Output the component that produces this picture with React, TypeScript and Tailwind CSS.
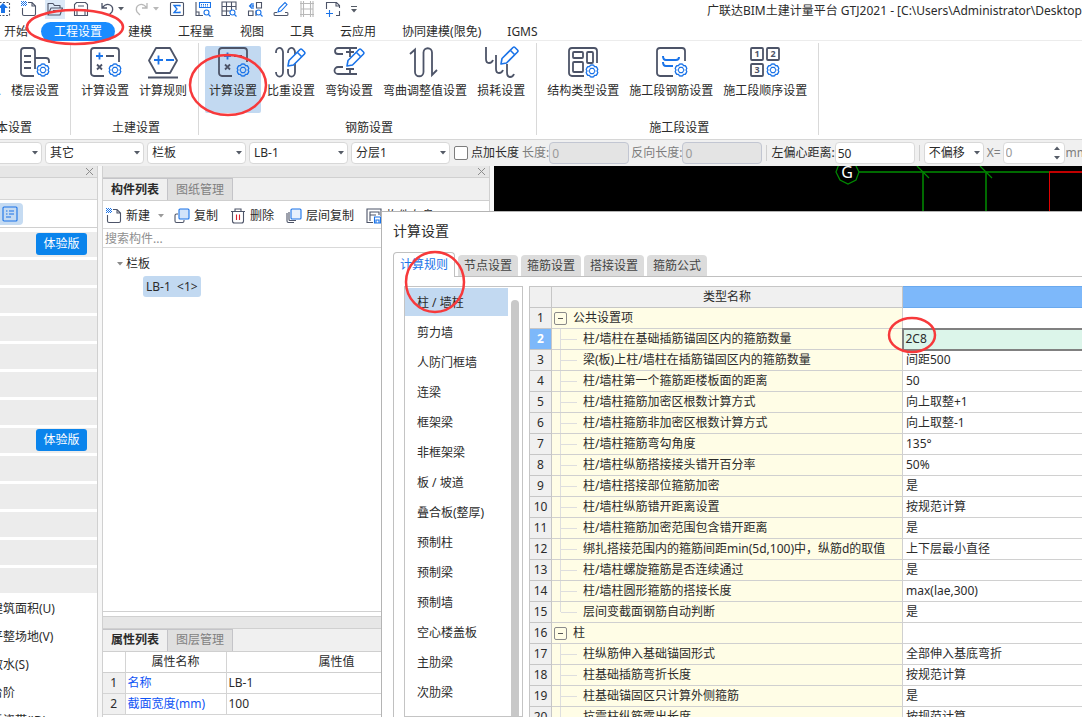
import type { ReactNode } from "react";

const DARK = "#4d5468";
const BLUE = "#1a73e8";

const Gear = ({ x, y, r = 6 }: { x: number; y: number; r?: number }) => {
  const points = Array.from({ length: 24 }, (_, i) => {
    const angle = (i * Math.PI) / 12;
    const radius = r * (i % 4 === 0 ? 0.84 : 1);
    return `${x + radius * Math.cos(angle)},${y + radius * Math.sin(angle)}`;
  }).join(" ");

  return (
    <g stroke={BLUE} fill="none" strokeWidth="1.3" strokeLinejoin="round">
      <polygon points={points} />
      <path d={`M${x - 1.5} ${y - 2.6}h3l1.5 2.6l-1.5 2.6h-3l-1.5-2.6z`} strokeWidth="1.1" />
    </g>
  );
};

const Pencil = ({ x, y }: { x: number; y: number }) => (
  <g transform={`translate(${x} ${y})`} stroke={BLUE} fill="#fff" strokeWidth="1.6" strokeLinejoin="round">
    <path d="M1 18l1-5.500L13 1.500q1-1 2 0l2.500 2.500q1 1 0 2L6.500 17z" />
    <path d="M10.500 4.500l4 4" fill="none" />
  </g>
);

const Art = ({ children, w = 30 }: { children: ReactNode; w?: number }) => (
  <svg
    width={w}
    height="30"
    viewBox={`0 0 ${w} 30`}
    fill="none"
    stroke={DARK}
    strokeWidth="1.8"
    className="overflow-visible"
    aria-hidden="true"
  >
    {children}
  </svg>
);

const FloorArt = () => (
  <Art>
    <path d="M14 29H4a3 3 0 0 1-3-3V4a3 3 0 0 1 3-3h8a3 3 0 0 1 3 3v18M15 11h11a3 3 0 0 1 3 3v2M4 9h7M4 15h7M4 21h7" />
    <Gear x={23} y={23} />
  </Art>
);

const CalcArt = () => (
  <Art>
    <path d="M14 29H4a3 3 0 0 1-3-3V4a3 3 0 0 1 3-3h22a3 3 0 0 1 3 3v11M16 9h8M7 17.500l5 5M12 17.500l-5 5" />
    <path d="M6 9h7M9.500 5.500v7" stroke={BLUE} />
    <Gear x={25} y={23} />
  </Art>
);

const RuleArt = () => (
  <Art>
    <path d="M8 1h14l7 12.500L22 26H8L1 13.500zM0 30.500h30" strokeLinejoin="round" />
    <path d="M6 13h9M10.500 8.500v9M18 13h8" stroke={BLUE} />
  </Art>
);

const WeightArt = () => (
  <Art>
    <path d="M0 6a3 4 0 0 1 7-1v20a3 4 0 0 1-7 0M12 6a3 4 0 0 1 7-1v20a3 4 0 0 1-7 0v-3" />
    <Pencil x={11} y={1} />
  </Art>
);

const HookArt = () => (
  <Art>
    <path d="M23 1H4a3 3 0 0 0 0 6h5M9 20H4a3 3 0 0 0 0 7h19M16 2v8M12 5h8M16 21v6M12 22h8" />
    <Pencil x={12} y={1} />
  </Art>
);

const BendArt = () => (
  <Art>
    <path d="M0 7l5-4.500V25a4 4 0 0 0 8.500 0V5.500a4 4 0 0 1 8.500 0V28l5-5" />
  </Art>
);

const LossArt = () => (
  <Art>
    <path d="M0 0v12q0 4 3 4t4-3M10 8v14q0 4 3 4t4-3M21 17v8q0 5 3 5t4-3" />
    <Pencil x={14} y={-1} />
  </Art>
);

const StructArt = () => (
  <Art>
    <path d="M16 29H4a3 3 0 0 1-3-3V4a3 3 0 0 1 3-3h22a3 3 0 0 1 3 3v12" />
    <rect x="5" y="5" width="10" height="6" rx="1" />
    <rect x="19" y="5" width="6" height="11" rx="1" />
    <rect x="5" y="15" width="10" height="10" rx="1" />
    <Gear x={24} y={24} />
  </Art>
);

const StageArt = () => (
  <Art>
    <path d="M17 29H4a3 3 0 0 1-3-3V4a3 3 0 0 1 3-3h22a3 3 0 0 1 3 3v10" />
    <path d="M7 9q0 4 3 4h10q3 0 3-3M7 15q0 4 3 4h7" stroke={BLUE} strokeWidth="2" />
    <Gear x={25} y={23} />
  </Art>
);

const OrderArt = () => (
  <Art>
    <rect x="1" y="1" width="12" height="12" rx="1" />
    <rect x="17" y="1" width="12" height="12" rx="1" />
    <rect x="1" y="17" width="12" height="12" rx="1" />
    <g fill={DARK} stroke="none" fontSize="9" fontWeight="700" textAnchor="middle">
      <text x="7" y="10">1</text>
      <text x="23" y="10">2</text>
      <text x="7" y="26">3</text>
    </g>
    <Gear x={23} y={23} />
  </Art>
);

const ribbon = [
  {
    title: "基本设置",
    items: [
      { label: "工程信息", art: <FloorArt /> },
      { label: "楼层设置", art: <FloorArt /> },
    ],
  },
  {
    title: "土建设置",
    items: [
      { label: "计算设置", art: <CalcArt /> },
      { label: "计算规则", art: <RuleArt /> },
    ],
  },
  {
    title: "钢筋设置",
    items: [
      { label: "计算设置", art: <CalcArt />, active: true },
      { label: "比重设置", art: <WeightArt /> },
      { label: "弯钩设置", art: <HookArt /> },
      { label: "弯曲调整值设置", art: <BendArt /> },
      { label: "损耗设置", art: <LossArt /> },
    ],
  },
  {
    title: "施工段设置",
    items: [
      { label: "结构类型设置", art: <StructArt /> },
      { label: "施工段钢筋设置", art: <StageArt /> },
      { label: "施工段顺序设置", art: <OrderArt /> },
    ],
  },
];

const menuTabs = ["开始", "工程设置", "建模", "工程量", "视图", "工具", "云应用", "协同建模(限免)", "IGMS"];

const Small = ({ children, stroke = DARK }: { children: ReactNode; stroke?: string }) => (
  <svg width="16" height="16" viewBox="0 0 16 16" fill="none" stroke={stroke} strokeWidth="1.1" aria-hidden="true">
    {children}
  </svg>
);

const Caret = ({ color = "#555b66" }: { color?: string }) => (
  <svg width="6" height="4" viewBox="0 0 6 4" className="shrink-0" aria-hidden="true">
    <path d="M0 0h6L3 3.500z" fill={color} />
  </svg>
);

const Lens = () => (
  <g stroke={BLUE}>
    <circle cx="11.500" cy="11.500" r="2.500" />
    <path d="M13.500 13.500l2 2" />
  </g>
);

const NewIcon = () => (
  <Small>
    <path d="M1.500 7v6q0 1.500 1.500 1.500h10q1.500 0 1.500-1.500V5L11 1.500H7M11 1.500V5h3.500" />
    <path d="M0 .5h5M1 1.500h5M0 2.500h5M1 3.500h5M0 4.500h5" stroke={BLUE} strokeWidth="1" strokeDasharray="1 1" />
  </Small>
);

const quickIcons = [
  {
    name: "上移",
    art: (
      <Small>
        <path d="M1 1.500h13.500v13H1z" strokeDasharray="2 1.500" />
        <path d="M8 2l5 5h-3v5H6V7H3z" fill={BLUE} stroke="none" />
      </Small>
    ),
  },
  { name: "新建", art: <NewIcon /> },
  {
    name: "打开",
    open: true,
    art: (
      <Small>
        <path d="M1 14V2.500h5l1.500 2H13V7M1 14l3-7h11.500L13 14z" strokeLinejoin="round" />
        <path d="M6 9.500h6" />
      </Small>
    ),
  },
  {
    name: "保存",
    art: (
      <Small>
        <path d="M1.500 14.500v-11l2-2h9l2 2v11z" />
        <path d="M5 5h6M4 14v-5h8v5" />
      </Small>
    ),
  },
  {
    name: "撤销",
    caret: "#555b66",
    art: (
      <Small>
        <path d="M3 2v5h5M3 7q4-5 8-3t2 7l-3 3" strokeWidth="1.300" />
      </Small>
    ),
  },
  {
    name: "重做",
    caret: "#b8b8b8",
    art: (
      <Small stroke="#b8b8b8">
        <path d="M13 2v5H8M13 7Q9 2 5 4t-2 7l3 3" strokeWidth="1.300" />
      </Small>
    ),
  },
  {
    name: "汇总",
    art: (
      <Small>
        <rect x="1.500" y="1.500" width="13" height="13" rx="1" />
        <path d="M11 5.500v-1H5L8 8l-3 3.500h6v-1" stroke={BLUE} strokeWidth="1.300" />
      </Small>
    ),
  },
  {
    name: "查看",
    art: (
      <Small>
        <path d="M1 1v13.500h7M1 11h3v3" />
        <path d="M4.500 1.500h11v5h-11z" stroke={BLUE} />
        <path d="M6 3.500h8M6 5h8" stroke={BLUE} strokeDasharray="1 1" />
        <Lens />
      </Small>
    ),
  },
  {
    name: "报表",
    art: (
      <Small>
        <path d="M9 14.500H1V1h14v8M1 5.500h14M1 10h8M5.500 1v13.500M10.500 1v8" />
        <Lens />
      </Small>
    ),
  },
  {
    name: "查找",
    art: (
      <Small>
        <path d="M9.500 1.500h5V7h-5zM1.500 10h4.500v4.500H1.500zM9 15V9.500" />
        <path d="M3 5h4M5 2.500L2.500 5L5 7.500M6 2v6" stroke={BLUE} />
        <Lens />
      </Small>
    ),
  },
  {
    name: "编辑",
    art: (
      <Small>
        <path d="M4 11.500H2q-1 0-1 1.500t1 1.500h12q1 0 1-1.500t-1-1.500h-2" />
        <path d="M5 11l1-3.500L12 1.500l2 2-6 6.500z" stroke={BLUE} fill="#fff" />
      </Small>
    ),
  },
  {
    name: "轴网",
    art: (
      <Small stroke="#b8b8b8">
        <path d="M2 0v16M4.500 0v16M11.500 0v16M14 0v16M1 2.500h14M2 8h12M1 13.500h14" />
      </Small>
    ),
  },
  {
    name: "添加",
    art: (
      <Small>
        <path d="M1.500 8V1.500h10l3 3V7M14.500 10v4.500H11M11 1.500V5h3.500" />
        <path d="M4.500 9v7M1 12.500h7" stroke={BLUE} />
      </Small>
    ),
  },
];

const Combo = ({ label, value, className }: { label: string; value: string; className: string }) => (
  <span className={`relative flex h-[22px] shrink-0 items-center ${className}`}>
    <select
      aria-label={label}
      className="h-full w-full appearance-none rounded border border-[#d8d8d8] bg-white pl-1 text-xs"
    >
      <option>{value}</option>
    </select>
    <span className="pointer-events-none absolute right-1">
      <Caret />
    </span>
  </span>
);

const Rule = () => <span className="mx-1 h-4 w-px shrink-0 bg-[#cfcfcf]" />;

const OptionBar = () => (
  <div className="flex h-[27px] shrink-0 items-center overflow-hidden whitespace-nowrap border-t border-[#d6d6d6] bg-[#f0f0f0]">
    <div className="-ml-[57px] flex shrink-0 gap-[3px]">
      <Combo label="楼层" value="" className="w-[99px]" />
      <Combo label="类别" value="其它" className="w-[99px]" />
      <Combo label="构件类型" value="栏板" className="w-[99px]" />
      <Combo label="构件" value="LB-1" className="w-[99px]" />
      <Combo label="分层" value="分层1" className="w-[99px]" />
    </div>
    <label className="ml-1 flex shrink-0 items-center gap-[3px]">
      <input type="checkbox" className="size-3.5 appearance-none rounded-xs border border-[#7d7d7d] bg-white" />
      点加长度
    </label>
    <label className="ml-[3px] flex shrink-0 items-center text-[#7d7d7d]">
      长度:
      <input
        disabled
        defaultValue="0"
        className="h-[22px] w-20 rounded border border-[#c2c6d2] bg-[#e4e4e4] px-0.5 text-[#9a9a9a]"
      />
    </label>
    <label className="ml-0.5 flex shrink-0 items-center text-[#7d7d7d]">
      反向长度:
      <input
        disabled
        defaultValue="0"
        className="h-[22px] w-20 rounded border border-[#c2c6d2] bg-[#e4e4e4] px-0.5 text-[#9a9a9a]"
      />
    </label>
    <Rule />
    <label className="flex shrink-0 items-center">
      左偏心距离:
      <input defaultValue="50" className="h-[22px] w-20 rounded border border-[#dadada] bg-white px-0.5" />
    </label>
    <Rule />
    <Combo label="偏移" value="不偏移" className="w-[60px]" />
    <label className="ml-[3px] flex shrink-0 items-center text-[#7d7d7d]">
      X=
      <span className="ml-0.5 flex h-[22px] w-[62px] items-center justify-between rounded border border-[#dadada] bg-white px-0.5">
        <input defaultValue="0" className="w-8 text-[#9a9a9a]" />
        <span className="flex flex-col gap-1.5 pr-0.5">
          <span className="rotate-180">
            <Caret />
          </span>
          <Caret />
        </span>
      </span>
      <span className="ml-px">mm</span>
    </label>
  </div>
);

const Strip = ({ close = true }: { close?: boolean }) => (
  <div className="flex h-3 shrink-0 items-center justify-end border-b border-[#d0d0d0] bg-[#e6e6e6] pr-1">
    {close && (
      <button aria-label="关闭">
        <svg width="7" height="7" viewBox="0 0 7 7" stroke="#8d8d8d" aria-hidden="true">
          <path d="M0 0l7 7M7 0L0 7" />
        </svg>
      </button>
    )}
  </div>
);

const trialRows = Array.from({ length: 13 }, (_, i) => i === 0 || i === 7);
const components = ["建筑面积(U)", "平整场地(V)", "散水(S)", "台阶", "后浇带(JD)"];

const NavPanel = () => (
  <aside className="flex w-[98px] shrink-0 flex-col overflow-hidden border-r border-[#d0d0d0] bg-white">
    <Strip />
    <div className="h-[22px] shrink-0 border-b border-[#d6d6d6] bg-[#f0f0f0]" />
    <div className="flex h-7 shrink-0 items-center border-b border-[#d0d0d0]">
      <button aria-label="列表视图" className="flex h-[22px] w-[23px] items-center rounded-r bg-[#c5dbf2] pl-0.5">
        <Small stroke={BLUE}>
          <rect x="1" y="1" width="14" height="14" rx="1" />
          <path d="M4 5h1.500M7 5h5M4 8h1.500M7 8h5M4 11h5" />
        </Small>
      </button>
    </div>
    <div className="mt-1 flex flex-col gap-[3px]">
      {trialRows.map((trial, idx) => (
        <div key={idx} className="flex h-[25px] items-start justify-end bg-[#ececec] pr-2.5 pt-px">
          {trial && <button className="h-[22px] w-[51px] rounded-[3px] bg-[#0a84ec] text-white">体验版</button>}
        </div>
      ))}
    </div>
    <ul className="-ml-[9px] mt-0.5 whitespace-nowrap">
      {components.map((name) => (
        <li key={name} className="h-7 leading-7">
          {name}
        </li>
      ))}
    </ul>
  </aside>
);

const PanelTabs = ({ tabs }: { tabs: string[] }) => (
  <div className="flex h-[23px] shrink-0 border-b border-[#cfcfcf] bg-[#f0f0f0]">
    {tabs.map((tab, idx) => (
      <button
        key={tab}
        className={`border-r border-t border-[#c4c4c8] px-2 ${
          idx === 0 ? "bg-[#f0f0f0] font-bold" : "bg-[#dfdfdf] text-[#7f7f7f]"
        }`}
      >
        {tab}
      </button>
    ))}
  </div>
);

const CopyIcon = () => (
  <Small>
    <path d="M4 6H2.500q-1.500 0-1.500 1.500v5.500q0 1.500 1.500 1.500h6q1.500 0 1.500-1.500V12" />
    <rect x="5" y="1" width="10" height="10" rx="1" stroke={BLUE} fill="#d3e4fa" />
  </Small>
);

const MiddlePanel = () => (
  <section className="flex w-[388px] shrink-0 flex-col overflow-hidden border-x border-[#d0d0d0] bg-white">
    <Strip />
    <PanelTabs tabs={["构件列表", "图纸管理"]} />
    <div className="flex h-7 shrink-0 items-center overflow-hidden whitespace-nowrap border-b border-[#d9d9d9] pl-[3px] pt-0.5">
      <button className="flex shrink-0 items-center gap-1">
        <NewIcon />
        新建
        <span className="ml-1">
          <Caret color="#9a9a9a" />
        </span>
      </button>
      <button className="ml-2.5 flex shrink-0 items-center gap-1">
        <CopyIcon />
        复制
      </button>
      <button className="ml-3 flex shrink-0 items-center gap-1">
        <Small>
          <path d="M1 3.500h14M5 3.500V1h6v2.500M2.500 3.500V13q0 2 2 2h7q2 0 2-2V3.500" />
          <path d="M6.500 6.500v5.500M9.500 6.500v5.500" stroke="#d9232e" />
        </Small>
        删除
      </button>
      <button className="ml-3 flex shrink-0 items-center gap-1">
        <Small>
          <path d="M1 5v8q0 1.500 1.500 1.500H8M3 4v7.500q0 1 1 1h6" />
          <rect x="5" y="1" width="10" height="10" rx="1" stroke={BLUE} fill="#e6f0fd" />
        </Small>
        层间复制
      </button>
      <button className="ml-3 flex shrink-0 items-center gap-1">
        <Small>
          <path d="M15 8V1H1v13.500h6M4 13V4h9v3M4 7h6" />
          <path d="M8.500 9h6v6h-6zM10 15v-3h3v3" stroke={BLUE} />
        </Small>
        构件存盘
      </button>
    </div>
    <input
      aria-label="搜索构件"
      placeholder="搜索构件..."
      className="h-[19px] shrink-0 border-b border-[#d9d9d9] px-0.5 placeholder:text-[#8f8f8f]"
    />
    <div className="min-h-0 grow pt-1">
      <div className="flex h-6 items-center gap-[3px] pl-3.5">
        <Caret color="#8a8a8a" />
        栏板
      </div>
      <button className="ml-10 h-[21px] rounded-[3px] bg-[#c2d9f1] px-[3px]">LB-1 &nbsp;&lt;1&gt;</button>
    </div>
    <div className="h-1.5 shrink-0 border-y border-[#d0d0d0] bg-white" />
    <div className="shrink-0 pb-0.5">
      <Strip close={false} />
      <PanelTabs tabs={["属性列表", "图层管理"]} />
      <table className="w-full table-fixed border-collapse">
        <colgroup>
          <col className="w-[22px]" />
          <col className="w-[101px]" />
          <col className="w-[221px]" />
          <col />
        </colgroup>
        <thead>
          <tr className="h-[21px] border-b border-[#cfcfcf]">
            <th />
            <th className="border-x border-[#d4d4d4] font-normal">属性名称</th>
            <th className="font-normal">属性值</th>
            <th className="border-l border-[#d4d4d4]" />
          </tr>
        </thead>
        <tbody>
          {[
            ["名称", "LB-1"],
            ["截面宽度(mm)", "100"],
          ].map(([name, value], idx) => (
            <tr key={name} className="h-[21px] border-b border-[#d4d4d4]">
              <td className="bg-[#f0f0f0] text-center">{idx + 1}</td>
              <td className="border-x border-[#d4d4d4] pl-0.5 text-[#1054f5]">{name}</td>
              <td className="pl-0.5">{value}</td>
              <td className="border-l border-[#d4d4d4]" />
            </tr>
          ))}
        </tbody>
      </table>
    </div>
  </section>
);

const Viewport = () => (
  <section className="ml-1 min-w-0 grow overflow-hidden bg-black">
    <svg width="588" height="60" viewBox="0 0 588 60" fill="none" aria-hidden="true">
      <path d="M365 6H555" stroke="#006a00" strokeWidth="2" />
      <path d="M429 6v54M492 6v54" stroke="#006a00" strokeWidth="2" />
      <path d="M423 0l12 12M486 0l12 12" stroke="#008a00" strokeWidth="1.200" />
      <path d="M555 6h33" stroke="#c00000" strokeWidth="2" />
      <path d="M555.500 6v54" stroke="#e00000" />
      <path d="M342 6l3-8h16l4 8-3 8-8 4-8-4z" stroke="#008a00" strokeWidth="1.200" />
      <text x="353" y="12" fill="#fff" fontSize="16" textAnchor="middle">
        G
      </text>
    </svg>
  </section>
);

const ruleKinds = [
  "柱 / 墙柱",
  "剪力墙",
  "人防门框墙",
  "连梁",
  "框架梁",
  "非框架梁",
  "板 / 坡道",
  "叠合板(整厚)",
  "预制柱",
  "预制梁",
  "预制墙",
  "空心楼盖板",
  "主肋梁",
  "次肋梁",
];

type Setting = { name: string; value: string; group?: boolean; last?: boolean };

const settings: Setting[] = [
  { name: "公共设置项", value: "", group: true },
  { name: "柱/墙柱在基础插筋锚固区内的箍筋数量", value: "2C8" },
  { name: "梁(板)上柱/墙柱在插筋锚固区内的箍筋数量", value: "间距500" },
  { name: "柱/墙柱第一个箍筋距楼板面的距离", value: "50" },
  { name: "柱/墙柱箍筋加密区根数计算方式", value: "向上取整+1" },
  { name: "柱/墙柱箍筋非加密区根数计算方式", value: "向上取整-1" },
  { name: "柱/墙柱箍筋弯勾角度", value: "135°" },
  { name: "柱/墙柱纵筋搭接接头错开百分率", value: "50%" },
  { name: "柱/墙柱搭接部位箍筋加密", value: "是" },
  { name: "柱/墙柱纵筋错开距离设置", value: "按规范计算" },
  { name: "柱/墙柱箍筋加密范围包含错开距离", value: "是" },
  { name: "绑扎搭接范围内的箍筋间距min(5d,100)中，纵筋d的取值", value: "上下层最小直径" },
  { name: "柱/墙柱螺旋箍筋是否连续通过", value: "是" },
  { name: "柱/墙柱圆形箍筋的搭接长度", value: "max(lae,300)" },
  { name: "层间变截面钢筋自动判断", value: "是", last: true },
  { name: "柱", value: "", group: true },
  { name: "柱纵筋伸入基础锚固形式", value: "全部伸入基底弯折" },
  { name: "柱基础插筋弯折长度", value: "按规范计算" },
  { name: "柱基础锚固区只计算外侧箍筋", value: "是" },
  { name: "抗震柱纵筋露出长度", value: "按规范计算" },
];

const SettingRow = ({ item, index }: { item: Setting; index: number }) => {
  const selected = index === 1;

  return (
    <tr className="h-[21px]">
      <td
        className={`border border-[#c6c6c6] text-center ${
          selected ? "bg-[#7db8fa] font-bold text-white" : "bg-[#f0f0f0]"
        }`}
      >
        {index + 1}
      </td>
      <td className="border border-[#d0d0d0] bg-[#fffde6] p-0">
        {item.group ? (
          <div className="flex items-center gap-1.5 pl-0.5">
            <button
              aria-label="折叠"
              className="flex size-[13px] items-center justify-center rounded-xs border border-[#8a8a8a]"
            >
              <span className="h-px w-[5px] bg-[#555]" />
            </button>
            {item.name}
          </div>
        ) : (
          <div className="flex h-5 items-center pl-2">
            <span className={`w-px self-start bg-[#dedede] ${item.last ? "h-2.5" : "h-5"}`} />
            <span className="mr-1.5 h-px w-4 bg-[#dedede]" />
            {item.name}
          </div>
        )}
      </td>
      <td
        className={
          selected
            ? "border-2 border-r-0 border-[#808080] bg-[#dcf5ea] pl-0.5"
            : "border border-r-0 border-[#d0d0d0] pl-[3px]"
        }
      >
        {item.value}
      </td>
    </tr>
  );
};

const CalcDialog = () => (
  <div
    role="dialog"
    aria-label="计算设置"
    className="absolute bottom-0 left-[381px] right-0 top-[211px] flex flex-col overflow-hidden border-l border-t border-[#b4b4b4] bg-white pl-[11px]"
  >
    <h1 className="h-10 shrink-0 text-sm leading-[38px]">计算设置</h1>
    <div className="flex h-[25px] shrink-0 items-end">
      <button className="h-[25px] w-[62px] rounded-t border border-b-0 border-[#c0c0c0] text-[#1a73e8]">计算规则</button>
      <div className="flex h-full grow items-end gap-[3px] border-b border-[#c0c0c0] pl-[3px]">
        {["节点设置", "箍筋设置", "搭接设置", "箍筋公式"].map((tab) => (
          <button key={tab} className="h-[21px] w-[60px] rounded-t bg-[#dcdcdc] text-[#444]">
            {tab}
          </button>
        ))}
      </div>
    </div>
    <div className="flex min-h-0 grow border-l border-[#c0c0c0] pl-2.5 pt-[9px]">
      <div className="flex w-[119px] shrink-0 overflow-hidden border border-[#c4c4c4] pt-px">
        <ul className="w-[103px] shrink-0">
          {ruleKinds.map((kind, idx) => (
            <li key={kind} className="mb-0.5">
              <button
                className={`h-7 w-full whitespace-nowrap pl-3 pt-0.5 text-left ${idx === 0 ? "bg-[#c2d9f1]" : ""}`}
              >
                {kind}
              </button>
            </li>
          ))}
        </ul>
        <div className="ml-[3px] mt-3 w-2 rounded-t-full bg-[#c8c8c8]" />
      </div>
      <div className="ml-1.5 min-w-0 grow overflow-hidden">
        <table className="w-full table-fixed border-collapse whitespace-nowrap">
          <colgroup>
            <col className="w-[22px]" />
            <col className="w-[351px]" />
            <col />
          </colgroup>
          <thead>
            <tr className="h-[21px]">
              <th className="border border-[#c6c6c6] bg-[#f0f0f0]" />
              <th className="border border-[#c6c6c6] bg-[#f0f0f0] font-normal">类型名称</th>
              <th className="border border-r-0 border-[#6aa9ee] bg-[#7db8fa]" />
            </tr>
          </thead>
          <tbody>
            {settings.map((item, index) => (
              <SettingRow key={item.name} item={item} index={index} />
            ))}
          </tbody>
        </table>
      </div>
    </div>
  </div>
);

const Marks = () => (
  <svg
    className="pointer-events-none absolute left-0 top-0"
    width="1082"
    height="400"
    fill="none"
    stroke="#f7393b"
    strokeWidth="2.500"
    aria-hidden="true"
  >
    <ellipse cx="75" cy="27" rx="48" ry="17" />
    <ellipse cx="228" cy="85" rx="38" ry="30" />
    <ellipse cx="435" cy="282" rx="29" ry="30" />
    <ellipse cx="912" cy="335" rx="23" ry="17" />
  </svg>
);

const App = () => {
  return (
    <main className="relative flex h-screen flex-col overflow-hidden bg-white font-['Noto_Sans','Noto_Sans_CJK_SC',sans-serif] text-xs text-[#2b2b2b]">
      <header className="flex h-[22px] shrink-0 overflow-hidden whitespace-nowrap">
        <div className="flex w-[707px] shrink-0 items-center pb-1">
          <div className="-ml-[5px] flex items-center gap-2.5">
            {quickIcons.map((icon) => (
              <button
                key={icon.name}
                aria-label={icon.name}
                className={`flex items-center gap-[3px] ${icon.open ? "bg-[#dbe9f8] outline-2 outline-[#dbe9f8]" : ""}`}
              >
                {icon.art}
                {icon.caret && <Caret color={icon.caret} />}
              </button>
            ))}
            <button aria-label="更多" className="flex flex-col gap-0.5">
              <span className="h-px w-1.5 bg-[#555b66]" />
              <Caret />
            </button>
          </div>
        </div>
        <span className="leading-[22px]">广联达BIM土建计量平台 GTJ2021 - [C:\Users\Administrator\Desktop</span>
      </header>

      <nav className="-ml-[9px] flex h-[19px] shrink-0 whitespace-nowrap border-b border-[#ececec]">
        {menuTabs.map((tab, idx) => (
          <button
            key={tab}
            className={`h-[19px] rounded-full px-[13px] ${idx === 1 ? "bg-[#1a8cff] text-white" : ""}`}
          >
            {tab}
          </button>
        ))}
      </nav>

      <div className="-ml-[57px] flex h-[98px] shrink-0 items-start pt-0.5">
        {ribbon.map((group) => (
          <section
            key={group.title}
            className="flex h-[92px] shrink-0 flex-col justify-between border-r border-[#d9d9d9] pl-1.5 pr-[7px] pt-[3px]"
          >
            <div className="flex gap-0.5">
              {group.items.map((item) => (
                <button
                  key={item.label}
                  className={`flex h-[67px] flex-col items-center gap-[5px] whitespace-nowrap rounded-xs px-1 pt-px ${
                    "active" in item ? "bg-[#c2d9f1]" : ""
                  }`}
                >
                  {item.art}
                  <span className="leading-[18px]">{item.label}</span>
                </button>
              ))}
            </div>
            <h2 className="pl-1 text-center leading-[14px]">{group.title}</h2>
          </section>
        ))}
      </div>

      <OptionBar />

      <div className="flex min-h-0 grow bg-[#f7f7f7]">
        <NavPanel />
        <div className="w-1 shrink-0" />
        <MiddlePanel />
        <Viewport />
      </div>

      <CalcDialog />
      <Marks />
    </main>
  );
};

export default App;
